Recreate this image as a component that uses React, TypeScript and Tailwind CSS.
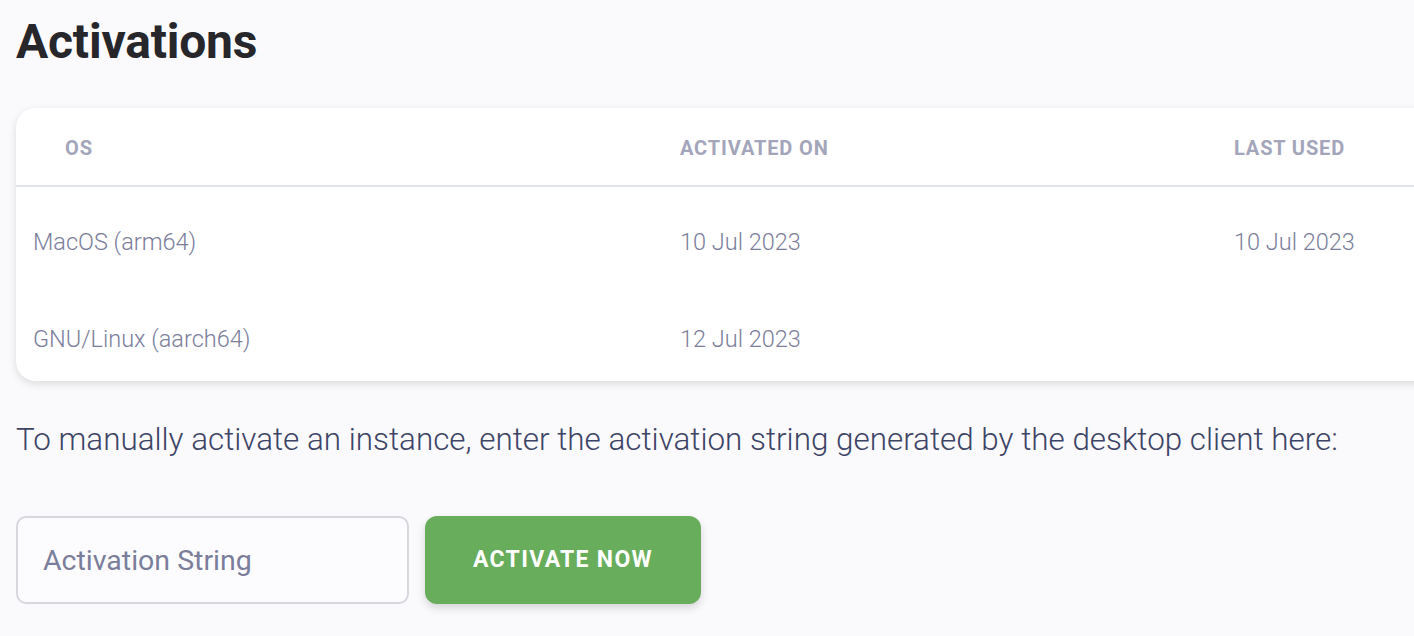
import React from "react";

const rows = [
  { os: "MacOS (arm64)", activated: "10 Jul 2023", last: "10 Jul 2023" },
  { os: "GNU/Linux (aarch64)", activated: "12 Jul 2023", last: "" },
];

export default function App() {
  return (
    <div
      className="w-[1414px] h-[636px] overflow-hidden bg-[#fafafc] pl-4"
      style={{ fontFamily: "Roboto, 'Noto Sans', sans-serif" }}
    >
      <h1 className="pt-[14px] text-[48px] leading-[56px] font-bold text-[#26262b] tracking-[-0.2px]">
        Activations
      </h1>
      <div className="mt-[38px] w-[1520px] rounded-[20px] bg-white shadow-[0_3px_8px_rgba(0,0,0,0.12)]">
        <div className="grid grid-cols-[664px_554px_1fr] h-[79px] items-center border-b-2 border-[#e1e5ea] text-[20px] leading-[24px] font-bold uppercase tracking-[0.85px] text-[#a3a5ba]">
          <div className="pl-[49px] pt-[2px]">OS</div>
          <div className="pt-[2px]">Activated On</div>
          <div className="pt-[2px]">Last Used</div>
        </div>
        {rows.map((r) => (
          <div
            key={r.os}
            className="grid grid-cols-[664px_554px_1fr] h-[97px] pt-[41px] text-[23.5px] leading-[28px] font-light text-[#7b7e9b]"
          >
            <div className="pl-[17px]">{r.os}</div>
            <div>{r.activated}</div>
            <div>{r.last}</div>
          </div>
        ))}
      </div>
      <p className="mt-[40px] text-[31.4px] leading-[38px] font-light text-[#3d4466]">
        To manually activate an instance, enter the activation string generated by the desktop client here:
      </p>
      <div className="mt-[57px] flex gap-4">
        <input
          className="w-[393px] h-[88px] rounded-[10px] border-2 border-[#d6d8de] bg-[#fcfcfe] pl-[25px] text-[28.5px] text-[#7b7e9b] placeholder:text-[#7b7e9b] outline-none"
          placeholder="Activation String"
        />
        <button className="w-[276px] h-[88px] rounded-[12px] bg-[#68ad5c] text-white text-[23px] font-bold tracking-[1.3px] uppercase shadow-[0_4px_8px_rgba(0,0,0,0.15)]">
          Activate Now
        </button>
      </div>
    </div>
  );
}
